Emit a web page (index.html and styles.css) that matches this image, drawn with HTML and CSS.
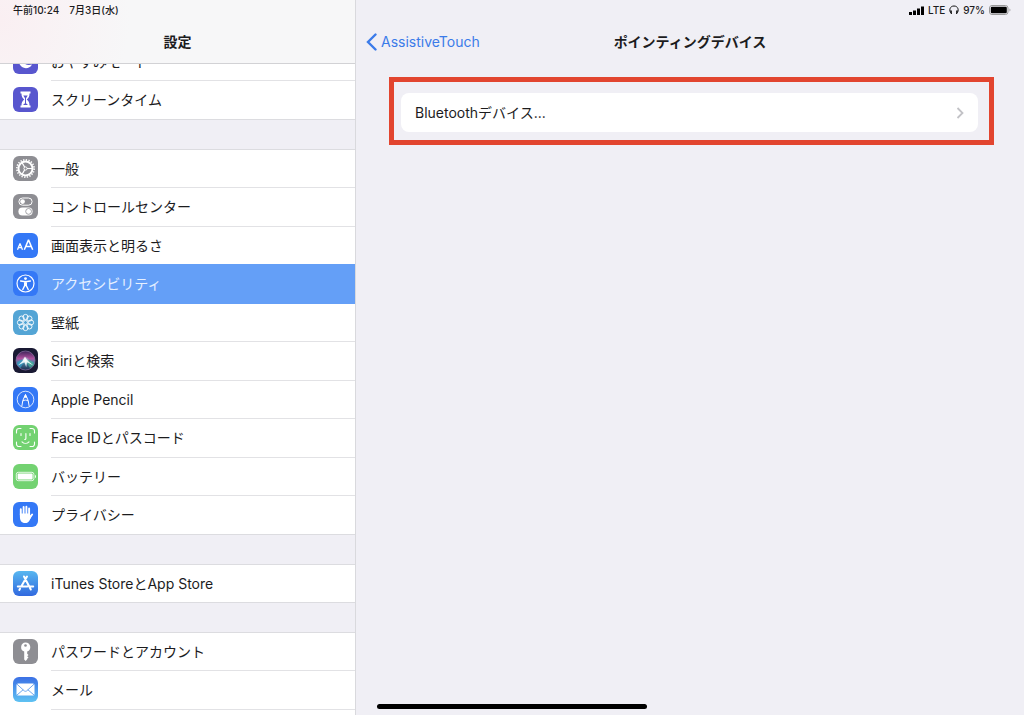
FILE: index.html
```html
<!DOCTYPE html>
<html lang="ja">
<head>
  <meta charset="UTF-8" />
  <meta name="viewport" content="width=device-width, initial-scale=1.0"/>
  <title>設定</title>
  <link rel="stylesheet" href="styles.css">
</head>
<body>
  <div class="settings">
    <aside class="sidebar">
      <header class="sidebar-header">
        <div class="status"><span>午前10:24</span><span class="date">7月3日(水)</span></div>
        <h1 class="title">設定</h1>
      </header>

      <nav class="menu">
        <div class="group group-first">
          <a href="#" class="row">
            <svg class="icon" viewBox="0 0 25 25"><rect width="25" height="25" rx="6" fill="#5856ce"/><path d="M8 6a8 8 0 0 0 1 12c3 2 8 1.500 10-2.500-7 2-11.500-3-11-9.500z" fill="#fff"/></svg>
            <span class="label">おやすみモード</span>
          </a>
          <a href="#" class="row">
            <svg class="icon" viewBox="0 0 25 25"><rect width="25" height="25" rx="6" fill="#5856ce"/><path d="M7.500 4.500h10v2h-1c0 3-.8 4.500-2.700 6 1.900 1.500 2.700 3 2.700 6h1v2h-10v-2h1c0-3 .8-4.500 2.700-6-1.900-1.500-2.700-3-2.700-6h-1z" fill="#fff"/><path d="M10.300 8.500h4.400l-1.700 2.800v5l2 1.700h-5l2-1.700v-5z" fill="#5856ce"/></svg>
            <span class="label">スクリーンタイム</span>
          </a>
        </div>

        <div class="group">
          <a href="#" class="row">
            <svg class="icon" viewBox="0 0 25 25"><rect width="25" height="25" rx="6" fill="#8e8e93"/><g fill="none" stroke="#fff"><circle cx="12.500" cy="12.500" r="8.600" stroke-width="1.700" stroke-dasharray="1.350 1.350"/><circle cx="12.500" cy="12.500" r="7" stroke-width="1.900"/><circle cx="12.500" cy="12.500" r="1.600" stroke-width="1"/><path d="M14 12.500h5M11.700 11.200L9.200 6.900M11.700 13.800l-2.500 4.300" stroke-width="1.200"/></g></svg>
            <span class="label">一般</span>
          </a>
          <a href="#" class="row">
            <svg class="icon" viewBox="0 0 25 25"><rect width="25" height="25" rx="6" fill="#8e8e93"/><rect x="5.900" y="4" width="13.200" height="7.200" rx="3.600" fill="none" stroke="#fff" stroke-width="1"/><circle cx="9.600" cy="7.600" r="2.300" fill="#fff"/><rect x="5.400" y="13.400" width="14.200" height="8" rx="4" fill="#fff"/><circle cx="15.600" cy="17.400" r="2.900" fill="#fff" stroke="#8e8e93" stroke-width=".8"/></svg>
            <span class="label">コントロールセンター</span>
          </a>
          <a href="#" class="row">
            <svg class="icon" viewBox="0 0 25 25"><rect width="25" height="25" rx="6" fill="#3478f6"/><g fill="none" stroke="#fff" stroke-width="1.300" stroke-linejoin="bevel"><path d="M4.500 16.700l2.500-6.300 2.500 6.300M5.400 14.600h3.200"/><path d="M11.300 16.700l4.200-9.800 4.200 9.800M12.700 13.500h5.600" stroke-width="1.500"/></g></svg>
            <span class="label">画面表示と明るさ</span>
          </a>
          <a href="#" class="row selected" aria-current="page">
            <svg class="icon" viewBox="0 0 25 25"><rect width="25" height="25" rx="6" fill="#3478f6"/><circle cx="12.500" cy="12.500" r="8.500" fill="none" stroke="#fff" stroke-width="1.200"/><circle cx="12.500" cy="7.600" r="1.400" fill="#fff"/><path d="M7.600 10l4.900.7 4.900-.7M12.500 10.500v4M11.700 11v3.500l-1.900 4M13.300 11v3.500l1.900 4" fill="none" stroke="#fff" stroke-width="1.400" stroke-linecap="round"/></svg>
            <span class="label">アクセシビリティ</span>
          </a>
          <a href="#" class="row">
            <svg class="icon" viewBox="0 0 25 25"><rect width="25" height="25" rx="6" fill="#54a5d5"/><g fill="none" stroke="#fff" stroke-width=".9"><circle cx="12.500" cy="12.500" r="2"/><circle cx="12.500" cy="7" r="2.600"/><circle cx="16.400" cy="8.600" r="2.600"/><circle cx="18" cy="12.500" r="2.600"/><circle cx="16.400" cy="16.400" r="2.600"/><circle cx="12.500" cy="18" r="2.600"/><circle cx="8.600" cy="16.400" r="2.600"/><circle cx="7" cy="12.500" r="2.600"/><circle cx="8.600" cy="8.600" r="2.600"/></g></svg>
            <span class="label">壁紙</span>
          </a>
          <a href="#" class="row">
            <svg class="icon" viewBox="0 0 25 25">
              <defs>
                <linearGradient id="siri" x1="0" y1="0" x2="0" y2="1"><stop offset="0" stop-color="#3c2358"/><stop offset=".4" stop-color="#b0519f"/><stop offset=".6" stop-color="#4a86a8"/><stop offset="1" stop-color="#1d2c4c"/></linearGradient>
                <radialGradient id="glow"><stop offset="0" stop-color="#fff"/><stop offset="1" stop-color="#78dbe6" stop-opacity="0"/></radialGradient>
              </defs>
              <rect width="25" height="25" rx="6" fill="#191933"/>
              <circle cx="12.500" cy="12.500" r="9.500" fill="url(#siri)" stroke="#8b71a5" stroke-width=".7"/>
              <path d="M3.800 16.500C5 12 8 11 12 12L7.500 20z" fill="#389bc2" opacity=".8"/>
              <path d="M12 12c4-1 8 1 9 5l-4 3z" fill="#46bd9d" opacity=".65"/>
              <circle cx="12.500" cy="12.500" r="4" fill="url(#glow)"/>
              <path d="M4.800 17.500l4.700-4.500L12 8.500l2 3.500 6.500 5.500-6.500-3.300-.8 5-1.700-5z" fill="#fff" opacity=".85"/>
            </svg>
            <span class="label">Siriと検索</span>
          </a>
          <a href="#" class="row">
            <svg class="icon" viewBox="0 0 25 25"><rect width="25" height="25" rx="6" fill="#3478f6"/><g fill="none" stroke="#fff"><circle cx="12.500" cy="12.500" r="8.300" stroke-width=".8"/><path d="M8.800 19.500l1-6 2.700-6 2.700 6 1 6M9.800 14c1.500-1.200 3.900-1.200 5.400 0" stroke-width="1"/></g><path d="M12.500 7l1.700 3.800h-3.400z" fill="#fff"/></svg>
            <span class="label">Apple Pencil</span>
          </a>
          <a href="#" class="row">
            <svg class="icon" viewBox="0 0 25 25"><rect width="25" height="25" rx="6" fill="#73d271"/><g fill="none" stroke="#fff" stroke-width="1.100" stroke-linecap="round"><path d="M3.500 8V6a2.500 2.500 0 0 1 2.500-2.500h2M17 3.500h2A2.500 2.500 0 0 1 21.500 6v2M21.500 17v2a2.500 2.500 0 0 1-2.500 2.500h-2M8 21.500H6A2.500 2.500 0 0 1 3.500 19v-2M8 8.500v2M17 8.500v2M12.900 8.500v5c0 .8-.5 1-1.200 1M9 16.800c2 2 5 2 7 0"/></g></svg>
            <span class="label">Face IDとパスコード</span>
          </a>
          <a href="#" class="row">
            <svg class="icon" viewBox="0 0 25 25"><rect width="25" height="25" rx="6" fill="#73d271"/><rect x="3.300" y="8.300" width="17.600" height="8.400" rx="2" fill="none" stroke="#fff" stroke-width=".8"/><rect x="4.600" y="9.600" width="15" height="5.800" rx="1" fill="#fff"/><path d="M22 10.800c1.300.6 1.300 2.800 0 3.400z" fill="#fff"/></svg>
            <span class="label">バッテリー</span>
          </a>
          <a href="#" class="row">
            <svg class="icon" viewBox="0 0 25 25"><rect width="25" height="25" rx="6" fill="#3478f6"/><g fill="none" stroke="#fff" stroke-width="1.900" stroke-linecap="round"><path d="M7.800 13V7.300M10.600 12V5M13.400 12V4.700M16.100 13V6.400M16.300 16.500l2.800-4"/></g><path d="M6.900 11.500h10.200v2l1.200-.6c-.8 4.600-2.300 8.100-6 8.100-4 0-5.400-2.600-5.400-6.500z" fill="#fff"/></svg>
            <span class="label">プライバシー</span>
          </a>
        </div>

        <div class="group">
          <a href="#" class="row">
            <svg class="icon" viewBox="0 0 25 25"><defs><linearGradient id="store" x1="0" y1="0" x2="0" y2="1"><stop offset="0" stop-color="#58b7f0"/><stop offset="1" stop-color="#3169df"/></linearGradient></defs><rect width="25" height="25" rx="6" fill="url(#store)"/><path d="M11 5.500l6.800 13M14 5.500l-5.800 10M7 17.700l-.7 1.200M4.800 15.500h9.400M17.200 15.500h3" fill="none" stroke="#fff" stroke-width="2" stroke-linecap="round"/></svg>
            <span class="label">iTunes StoreとApp Store</span>
          </a>
        </div>

        <div class="group">
          <a href="#" class="row">
            <svg class="icon" viewBox="0 0 25 25"><rect width="25" height="25" rx="6" fill="#8e8e93"/><path d="M12.500 3.500a4.700 4.700 0 0 1 1.700 9.100v2.200l1.300 1.200-1.300 1.300 1.300 1.300-1.300 1.200v.5l-1.500 1.700-1.500-1.400v-8a4.700 4.700 0 0 1 1.300-9.100z" fill="#fff"/><circle cx="12.500" cy="6.500" r="1.300" fill="#8e8e93"/></svg>
            <span class="label">パスワードとアカウント</span>
          </a>
          <a href="#" class="row">
            <svg class="icon" viewBox="0 0 25 25"><defs><linearGradient id="mail" x1="0" y1="0" x2="0" y2="1"><stop offset="0" stop-color="#3b70e5"/><stop offset="1" stop-color="#5fc2f2"/></linearGradient></defs><rect width="25" height="25" rx="6" fill="url(#mail)"/><rect x="3.500" y="6.500" width="18" height="12" rx="1.500" fill="#fff"/><path d="M4 7.200l7.200 6.600c.8.700 1.800.7 2.600 0L21 7.200M4 18l6.200-5.300M21 18l-6.200-5.300" fill="none" stroke="#4a90e8" stroke-width=".8"/></svg>
            <span class="label">メール</span>
          </a>
          <div class="row"></div>
        </div>
      </nav>
    </aside>

    <main class="detail">
      <div class="status status-right">
        <svg class="signal" viewBox="0 0 15 9"><path d="M0 6h3v3H0zM4 4.500h3V9H4zM8 2.500h3V9H8zM12 .5h3V9h-3z"/></svg>
        <span>LTE</span>
        <svg class="headphones" viewBox="0 0 10 10"><path d="M2.200 8.500C-.4 5.500.8 1 5 1s5.400 4.500 2.800 7.500" fill="none" stroke="#111"/><path d="M1.200 5.600h1.600v3.400H2zM8.800 5.600H7.200v3.400H8z"/></svg>
        <span>97%</span>
        <svg class="battery" viewBox="0 0 22 10"><rect x=".5" y=".5" width="18.500" height="9" rx="2.500" fill="none" stroke="#999"/><rect x="1.800" y="1.800" width="16" height="6.400" rx="1.200"/><path d="M20.500 3.500c1.200.5 1.200 2.500 0 3z" fill="#999"/></svg>
      </div>
      <header class="detail-header">
        <a href="#" class="back">
          <svg class="back-arrow" viewBox="0 0 11 18"><path d="M9.500 1.500L2 9l7.500 7.500" fill="none" stroke="#3b7be9" stroke-width="2.400" stroke-linecap="round"/></svg>
          <span>AssistiveTouch</span>
        </a>
        <h2 class="title">ポインティングデバイス</h2>
      </header>
      <section class="highlight">
        <a href="#" class="card">
          <span>Bluetoothデバイス...</span>
          <svg class="chevron" viewBox="0 0 8 12"><path d="M1.500 1l5 5-5 5" fill="none" stroke="#c2c2c6" stroke-width="1.800"/></svg>
        </a>
      </section>
    </main>

    <div class="home-bar"></div>
  </div>
</body>
</html>
```
FILE: styles.css
```css
* {
  margin: 0;
  padding: 0;
  box-sizing: border-box;
}

body {
  font-family: Inter, "Noto Sans CJK JP", sans-serif;
  font-size: 14px;
  line-height: 20px;
  color: #1c1c1e;
  background-color: #f0eff5;
}

a {
  color: inherit;
  text-decoration: none;
}

svg {
  display: block;
  flex-shrink: 0;
}

.settings {
  display: flex;
  height: 100vh;
  overflow: hidden;
  position: relative;
}

.sidebar {
  width: 356px;
  flex-shrink: 0;
  display: flex;
  flex-direction: column;
  border-right: 1px solid #d9d9dd;
}

.sidebar-header {
  height: 64px;
  flex-shrink: 0;
  border-bottom: 1px solid #d2d2d5;
  background: radial-gradient(circle at 0 20px, #faeff2, #f7f7f8 130px);
}

.status {
  display: flex;
  align-items: center;
  height: 20px;
  padding-left: 13px;
  gap: 10px;
  font-size: 10px;
  font-weight: 500;
}

.title {
  font-size: 14px;
  font-weight: 700;
  line-height: 20px;
  text-align: center;
}

.sidebar-header .title {
  margin-top: 12px;
}

.menu {
  flex: 1;
  overflow: hidden;
}

.group {
  margin-bottom: 29px;
  border-top: 1px solid #dcdce0;
  background-color: #fff;
}

/* list is scrolled a little under the header */
.group-first {
  margin-top: -22px;
}

.row {
  display: flex;
  height: 38px;
  padding-left: 13px;
  gap: 13px;
}

.row:nth-child(even) {
  height: 39px;
}

.icon {
  width: 25px;
  height: 25px;
  margin-top: 6px;
}

.label {
  flex: 1;
  display: flex;
  align-items: center;
  border-bottom: 1px solid #e2e2e5;
}

.row:last-child {
  border-bottom: 1px solid #dcdce0;
}

.row:last-child .label {
  border-bottom: none;
}

.row.selected {
  position: relative;
  background-color: #649ff7;
  box-shadow: 0 -1px #649ff7;
  color: #e6f0ff;
}

.selected .label {
  border-color: #649ff7;
}

.detail {
  flex: 1;
}

.status-right {
  justify-content: flex-end;
  padding-right: 13px;
  gap: 4px;
}

.signal {
  width: 15px;
  height: 9px;
}

.headphones {
  width: 10px;
  height: 10px;
}

.battery {
  width: 22px;
  height: 10px;
}

.detail-header {
  display: grid;
  grid-template-columns: 1fr auto 1fr;
  align-items: center;
  height: 44px;
}

.back {
  display: flex;
  align-items: center;
  gap: 4px;
  padding-left: 10px;
  color: #3b7be9;
}

.back-arrow {
  width: 11px;
  height: 18px;
}

.highlight {
  margin: 13px 30px 0 33px;
  padding: 11px 11px 8px 7px;
  border: 5px solid #e2452f;
}

.card {
  display: flex;
  align-items: center;
  justify-content: space-between;
  height: 39px;
  padding: 0 14px;
  border-radius: 8px;
  background-color: #fff;
}

.chevron {
  width: 8px;
  height: 12px;
}

.home-bar {
  position: absolute;
  bottom: 6px;
  left: 50%;
  width: 270px;
  height: 5px;
  margin-left: -135px;
  border-radius: 3px;
  background-color: #000;
}
```
